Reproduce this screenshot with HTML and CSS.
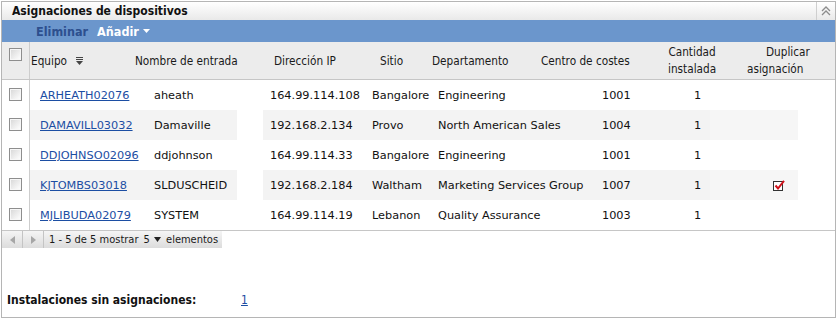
FILE: index.html
```html
<!DOCTYPE html>
<html lang="es">
<head>
<meta charset="utf-8">
<title>Asignaciones de dispositivos</title>
<link rel="stylesheet" href="styles.css">
</head>
<body>
<div class="panel">
  <div class="titlebar">
    <span class="title">Asignaciones de dispositivos</span>
    <span class="collapse">
      <svg width="10" height="10" viewBox="0 0 10 10"><path d="M1 5 L5 1 L9 5 M1 9 L5 5 L9 9" fill="none" stroke="#8c8c8c" stroke-width="1.3"/></svg>
    </span>
  </div>
  <div class="toolbar">
    <span class="tb-disabled">Eliminar</span>
    <span class="tb-menu">Añadir<svg class="caret" width="7" height="4" viewBox="0 0 7 4"><path d="M0 0 H7 L3.5 4 Z" fill="#ffffff"/></svg></span>
  </div>

  <div class="grid header">
    <div class="c-chk"><span class="chk hdr-chk"></span></div>
    <div class="h h-equipo">Equipo<svg class="sort" width="7" height="8" viewBox="0 0 7 8"><path d="M0 0.5 H7 M0 2.5 H7" stroke="#444" stroke-width="1"/><path d="M0 4 H7 L3.5 8 Z" fill="#444"/></svg></div>
    <div class="h h-nombre">Nombre de entrada</div>
    <div class="h"></div>
    <div class="h h-ip">Dirección IP</div>
    <div class="h h-sitio">Sitio</div>
    <div class="h h-dept">Departamento</div>
    <div class="h h-centro">Centro de costes</div>
    <div class="h h-cant"><span class="two">Cantidad<br>instalada</span></div>
    <div class="h h-dup"><span class="l1">Duplicar</span><span class="l2">asignación</span></div>
    <div class="h"></div>
  </div>

  <div class="grid row">
    <div class="c-chk"><span class="chk"></span></div>
    <div class="d d-equipo"><a href="#">ARHEATH02076</a></div>
    <div class="d d-nombre">aheath</div>
    <div class="gap"></div>
    <div class="d d-ip">164.99.114.108</div>
    <div class="d d-sitio">Bangalore</div>
    <div class="d d-dept">Engineering</div>
    <div class="d d-centro">1001</div>
    <div class="d d-cant">1</div>
    <div class="d d-dup"></div>
    <div class="gap"></div>
  </div>
  <div class="grid row alt">
    <div class="c-chk"><span class="chk"></span></div>
    <div class="d d-equipo"><a href="#">DAMAVILL03032</a></div>
    <div class="d d-nombre">Damaville</div>
    <div class="gap"></div>
    <div class="d d-ip">192.168.2.134</div>
    <div class="d d-sitio">Provo</div>
    <div class="d d-dept">North American Sales</div>
    <div class="d d-centro">1004</div>
    <div class="d d-cant">1</div>
    <div class="d d-dup"></div>
    <div class="gap"></div>
  </div>
  <div class="grid row">
    <div class="c-chk"><span class="chk"></span></div>
    <div class="d d-equipo"><a href="#">DDJOHNSO02096</a></div>
    <div class="d d-nombre">ddjohnson</div>
    <div class="gap"></div>
    <div class="d d-ip">164.99.114.33</div>
    <div class="d d-sitio">Bangalore</div>
    <div class="d d-dept">Engineering</div>
    <div class="d d-centro">1001</div>
    <div class="d d-cant">1</div>
    <div class="d d-dup"></div>
    <div class="gap"></div>
  </div>
  <div class="grid row alt">
    <div class="c-chk"><span class="chk"></span></div>
    <div class="d d-equipo"><a href="#">KJTOMBS03018</a></div>
    <div class="d d-nombre">SLDUSCHEID</div>
    <div class="gap"></div>
    <div class="d d-ip">192.168.2.184</div>
    <div class="d d-sitio">Waltham</div>
    <div class="d d-dept">Marketing Services Group</div>
    <div class="d d-centro">1007</div>
    <div class="d d-cant">1</div>
    <div class="d d-dup"><svg class="checked" width="12" height="12" viewBox="0 0 12 12"><rect x="0.5" y="1.5" width="9" height="9" fill="#fff" stroke="#333" stroke-width="1"/><path d="M2.5 5.5 L5 8.5 L11 0.8" fill="none" stroke="#d0121b" stroke-width="2"/></svg></div>
    <div class="gap"></div>
  </div>
  <div class="grid row last">
    <div class="c-chk"><span class="chk"></span></div>
    <div class="d d-equipo"><a href="#">MJLIBUDA02079</a></div>
    <div class="d d-nombre">SYSTEM</div>
    <div class="gap"></div>
    <div class="d d-ip">164.99.114.19</div>
    <div class="d d-sitio">Lebanon</div>
    <div class="d d-dept">Quality Assurance</div>
    <div class="d d-centro">1003</div>
    <div class="d d-cant">1</div>
    <div class="d d-dup"></div>
    <div class="gap"></div>
  </div>

  <div class="pager">
    <span class="pg-btn"><svg width="5" height="8" viewBox="0 0 5 8"><path d="M5 0 V8 L0 4 Z" fill="#a6a6a6"/></svg></span>
    <span class="pg-btn"><svg width="5" height="8" viewBox="0 0 5 8"><path d="M0 0 V8 L5 4 Z" fill="#a6a6a6"/></svg></span>
    <span class="pg-text">1 - 5 de 5 mostrar <span class="pg-size">5<svg width="7" height="5" viewBox="0 0 7 5"><path d="M0 0 H7 L3.5 5 Z" fill="#222"/></svg></span> elementos</span>
  </div>

  <div class="footer">
    <span class="footer-label">Instalaciones sin asignaciones:</span>
    <a href="#" class="footer-link">1</a>
  </div>
</div>
</body>
</html>
```
FILE: styles.css
```css
* { box-sizing: border-box; }
html, body { margin: 0; padding: 0; background: #ffffff; }
body { font-family: "DejaVu Sans", Verdana, sans-serif; color: #111; }

.panel {
  margin: 1px 0 0 1px;
  width: 835px;
  height: 317px;
  border: 1px solid #b5b5b5;
  background: #fff;
}

.titlebar {
  height: 18px;
  display: flex;
  align-items: center;
  justify-content: space-between;
  background: linear-gradient(#ffffff, #e9e9e9);
}
.title {
  font-family: "DejaVu Sans Condensed", "DejaVu Sans", sans-serif;
  font-stretch: condensed;
  font-weight: bold;
  font-size: 12px;
  padding-left: 10px;
  color: #111;
}
.collapse {
  width: 19px;
  height: 18px;
  border-left: 1px solid #cfcfcf;
  display: flex;
  align-items: center;
  justify-content: center;
}

.toolbar {
  height: 22px;
  background: #6b96cc;
  display: flex;
  align-items: center;
  gap: 9px;
  padding-left: 34px;
  font-family: "DejaVu Sans Condensed", "DejaVu Sans", sans-serif;
  font-stretch: condensed;
  font-weight: bold;
  font-size: 12.5px;
}
.tb-disabled { color: #2d4f8e; }
.tb-menu { color: #fff; display: flex; align-items: center; }
.caret { margin-left: 4px; }

.grid {
  display: grid;
  grid-template-columns: 28px 100px 107px 26px 105px 64px 108px 100px 70px 88px 1fr;
}

.c-chk { border-right: 1px solid #cdcdcd; display: flex; justify-content: center; background: #fff; }
.header .c-chk { background: transparent; }
.chk {
  display: block;
  width: 13px;
  height: 13px;
  border: 1px solid #8e8e8e;
  background: linear-gradient(135deg, #d6d6d6, #f4f4f4 70%, #ffffff);
  box-shadow: inset 0 0 0 1px #f7f7f7;
}

.header {
  height: 38px;
  background: #ececec;
  border-bottom: 1px solid #c6c6c6;
  font-family: "DejaVu Sans Condensed", "DejaVu Sans", sans-serif;
  font-stretch: condensed;
  font-size: 11.7px;
  color: #1a1a1a;
}
.header .c-chk { align-items: flex-start; padding-top: 6px; }
.h { white-space: nowrap; display: flex; align-items: center; }
.h-equipo { padding-left: 1px; }
.sort { margin-left: 9px; margin-top: 1px; }
.h-nombre { padding-left: 5px; }
.h-ip { padding-left: 11px; }
.h-sitio { padding-left: 12px; }
.h-dept { padding-left: 0; }
.h-centro { padding-left: 1px; }
.h-cant { padding-left: 28px; overflow: visible; }
.two { display: inline-block; text-align: center; line-height: 17px; }
.h-dup { flex-direction: column; align-items: flex-start; justify-content: center; line-height: 17px; }
.h-dup .l1 { padding-left: 56px; }
.h-dup .l2 { padding-left: 37px; }

.row {
  height: 30px;
  grid-template-rows: 30px;
  font-size: 11.3px;
  line-height: 32px;
  color: #111;
}
.row.alt { background: #f3f3f3; }
.row .gap { background: #fff; }
.row.alt .d-dup { background: #f6f6f6; }
.row .c-chk { align-items: flex-start; padding-top: 8px; }
.row.last { height: 31px; border-bottom: 1px solid #c6c6c6; }
.d { white-space: nowrap; }
.d a { color: #1c4ea3; text-decoration: underline; }
.d-equipo { padding-left: 10px; }
.d-nombre { padding-left: 24px; }
.d-ip { padding-left: 7px; }
.d-sitio { padding-left: 4px; }
.d-dept { padding-left: 6px; }
.d-centro { padding-left: 62px; }
.d-cant { padding-left: 54px; }
.d-dup { padding-left: 63px; display: flex; align-items: center; padding-top: 2px; }

.pager {
  display: flex;
  align-items: center;
  width: 220px;
  height: 17px;
  background: linear-gradient(#f5f5f5, #dcdcdc);
  font-family: "DejaVu Sans Condensed", "DejaVu Sans", sans-serif;
  font-stretch: condensed;
  font-size: 11px;
  color: #1a1a1a;
}
.pg-btn {
  width: 21px;
  height: 17px;
  border-right: 1px solid #c4c4c4;
  display: flex;
  align-items: center;
  justify-content: center;
}
.pg-text { padding-left: 5px; white-space: nowrap; }
.pg-size { display: inline-flex; align-items: center; gap: 4px; margin: 0 2px; }

.footer {
  display: flex;
  align-items: center;
  margin-top: 44px;
  padding-left: 5px;
  height: 16px;
  font-family: "DejaVu Sans Condensed", "DejaVu Sans", sans-serif;
  font-stretch: condensed;
  font-size: 12px;
}
.footer-label { font-weight: bold; color: #111; width: 234px; }
.footer-link { color: #1c4ea3; text-decoration: underline; font-weight: normal; font-size: 12px; }
```
